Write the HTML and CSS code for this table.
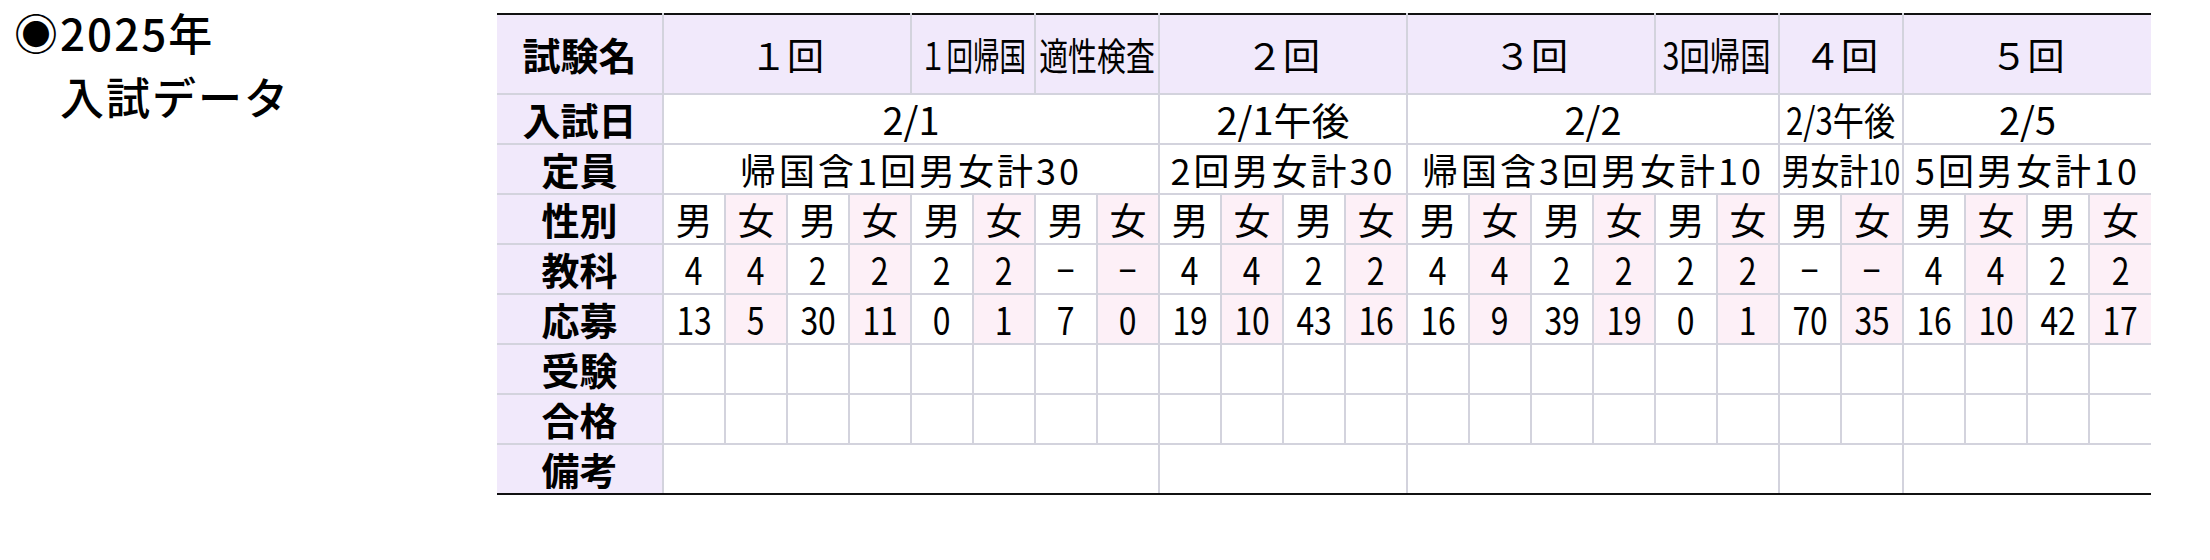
FILE: index.html
```html
<!DOCTYPE html>
<html lang="ja">
<head>
<meta charset="utf-8">
<title>2025年 入試データ</title>
<link rel="stylesheet" href="styles.css">
</head>
<body>
<div class="page">
  <div class="title">◉2025年<br>　入試データ</div>
  <div class="table-wrap">
    <table class="exam">
      <colgroup>
        <col class="c-lab">
        <col class="c-d"><col class="c-d"><col class="c-d"><col class="c-d"><col class="c-d"><col class="c-d"><col class="c-d"><col class="c-d">
        <col class="c-d"><col class="c-d"><col class="c-d"><col class="c-d"><col class="c-d"><col class="c-d"><col class="c-d"><col class="c-d">
        <col class="c-d"><col class="c-d"><col class="c-d"><col class="c-d"><col class="c-d"><col class="c-d"><col class="c-d"><col class="c-d">
      </colgroup>
      <tr class="hdr">
        <td class="lab">試験名</td>
        <td colspan="4" class="ev">１回</td>
        <td colspan="2" class="ev"><span class="sq sq-a">１回帰国</span></td>
        <td colspan="2" class="ev"><span class="sq sq-e">適性検査</span></td>
        <td colspan="4" class="ev">２回</td>
        <td colspan="4" class="ev">３回</td>
        <td colspan="2" class="ev"><span class="sq sq-b">3回帰国</span></td>
        <td colspan="2" class="ev">４回</td>
        <td colspan="4" class="ev">５回</td>
      </tr>
      <tr class="row">
        <td class="lab">入試日</td>
        <td colspan="8" class="date">2/1</td>
        <td colspan="4" class="date">2/1午後</td>
        <td colspan="6" class="date">2/2</td>
        <td colspan="2" class="date"><span class="sq sq-c">2/3午後</span></td>
        <td colspan="4" class="date">2/5</td>
      </tr>
      <tr class="row">
        <td class="lab">定員</td>
        <td colspan="8" class="cap cap-wide">帰国含1回男女計30</td>
        <td colspan="4" class="cap cap-wide">2回男女計30</td>
        <td colspan="6" class="cap cap-wide">帰国含3回男女計10</td>
        <td colspan="2" class="cap"><span class="sq sq-d">男女計10</span></td>
        <td colspan="4" class="cap cap-wide">5回男女計10</td>
      </tr>
      <tr class="row">
        <td class="lab">性別</td>
        <td>男</td><td class="f">女</td><td>男</td><td class="f">女</td>
        <td>男</td><td class="f">女</td><td>男</td><td class="f">女</td>
        <td>男</td><td class="f">女</td><td>男</td><td class="f">女</td>
        <td>男</td><td class="f">女</td><td>男</td><td class="f">女</td>
        <td>男</td><td class="f">女</td><td>男</td><td class="f">女</td>
        <td>男</td><td class="f">女</td><td>男</td><td class="f">女</td>
      </tr>
      <tr class="row num">
        <td class="lab">教科</td>
        <td><span class="n">4</span></td><td class="f"><span class="n">4</span></td><td><span class="n">2</span></td><td class="f"><span class="n">2</span></td>
        <td><span class="n">2</span></td><td class="f"><span class="n">2</span></td><td><span class="n">−</span></td><td class="f"><span class="n">−</span></td>
        <td><span class="n">4</span></td><td class="f"><span class="n">4</span></td><td><span class="n">2</span></td><td class="f"><span class="n">2</span></td>
        <td><span class="n">4</span></td><td class="f"><span class="n">4</span></td><td><span class="n">2</span></td><td class="f"><span class="n">2</span></td>
        <td><span class="n">2</span></td><td class="f"><span class="n">2</span></td><td><span class="n">−</span></td><td class="f"><span class="n">−</span></td>
        <td><span class="n">4</span></td><td class="f"><span class="n">4</span></td><td><span class="n">2</span></td><td class="f"><span class="n">2</span></td>
      </tr>
      <tr class="row num">
        <td class="lab">応募</td>
        <td><span class="n">13</span></td><td class="f"><span class="n">5</span></td><td><span class="n">30</span></td><td class="f"><span class="n">11</span></td>
        <td><span class="n">0</span></td><td class="f"><span class="n">1</span></td><td><span class="n">7</span></td><td class="f"><span class="n">0</span></td>
        <td><span class="n">19</span></td><td class="f"><span class="n">10</span></td><td><span class="n">43</span></td><td class="f"><span class="n">16</span></td>
        <td><span class="n">16</span></td><td class="f"><span class="n">9</span></td><td><span class="n">39</span></td><td class="f"><span class="n">19</span></td>
        <td><span class="n">0</span></td><td class="f"><span class="n">1</span></td><td><span class="n">70</span></td><td class="f"><span class="n">35</span></td>
        <td><span class="n">16</span></td><td class="f"><span class="n">10</span></td><td><span class="n">42</span></td><td class="f"><span class="n">17</span></td>
      </tr>
      <tr class="row">
        <td class="lab">受験</td>
        <td></td><td></td><td></td><td></td><td></td><td></td><td></td><td></td>
        <td></td><td></td><td></td><td></td><td></td><td></td><td></td><td></td>
        <td></td><td></td><td></td><td></td><td></td><td></td><td></td><td></td>
      </tr>
      <tr class="row">
        <td class="lab">合格</td>
        <td></td><td></td><td></td><td></td><td></td><td></td><td></td><td></td>
        <td></td><td></td><td></td><td></td><td></td><td></td><td></td><td></td>
        <td></td><td></td><td></td><td></td><td></td><td></td><td></td><td></td>
      </tr>
      <tr class="row last">
        <td class="lab">備考</td>
        <td colspan="8"></td>
        <td colspan="4"></td>
        <td colspan="6"></td>
        <td colspan="2"></td>
        <td colspan="4"></td>
      </tr>
    </table>
  </div>
</div>
</body>
</html>
```

FILE: styles.css
```css
* {
  box-sizing: border-box;
}

body {
  margin: 0;
  background: #ffffff;
  color: #000000;
  font-family: "Noto Sans CJK JP", "Noto Sans", sans-serif;
}

.page {
  display: flex;
  align-items: flex-start;
}

.title {
  flex: 0 0 497px;
  padding: 0 0 0 14px;
  font-size: 44px;
  line-height: 64px;
  letter-spacing: 2px;
  font-weight: 500;
  white-space: nowrap;
}

.table-wrap {
  margin-top: 13px;
}

.exam {
  border-collapse: collapse;
  table-layout: fixed;
  width: 1654px;
}

.c-lab {
  width: 166px;
}

.c-d {
  width: 62px;
}

.exam td {
  padding: 0;
  text-align: center;
  vertical-align: middle;
  white-space: nowrap;
  line-height: 1;
  border: 2px solid #d3d3dd;
  font-size: 37px;
  font-weight: 400;
  background: #ffffff;
}

.exam tr > td:first-child {
  border-left: none;
}

.exam tr > td:last-child {
  border-right: none;
}

.hdr td {
  border-top: 2px solid #111111;
  height: 80px;
  background: #f1e9fb;
}

.row td {
  height: 50px;
}

.last td {
  border-bottom: 2px solid #111111;
}

.exam td.lab {
  background: #f1e9fb;
  font-size: 38px;
  font-weight: 700;
}

.ev {
  font-size: 38px;
  font-weight: 500;
}

.exam td.date {
  font-size: 38px;
}

.exam td.cap {
  font-size: 36px;
}

.exam td.cap-wide {
  letter-spacing: 3px;
}

.exam td.f {
  background: #fdf0f7;
}

.num td {
  font-size: 38px;
}

.n {
  display: inline-block;
  margin: 0 -8px;
  transform: scaleX(0.84);
}

.sq {
  display: inline-block;
  margin: 0 -30px;
  transform-origin: center center;
}

.sq-a {
  font-size: 38px;
  transform: scaleX(0.7);
}

.sq-e {
  font-size: 38px;
  transform: scaleX(0.76);
}

.sq-b {
  font-size: 38px;
  transform: scaleX(0.8);
}

.sq-c {
  transform: scaleX(0.82);
}

.sq-d {
  transform: scaleX(0.8);
}
```
